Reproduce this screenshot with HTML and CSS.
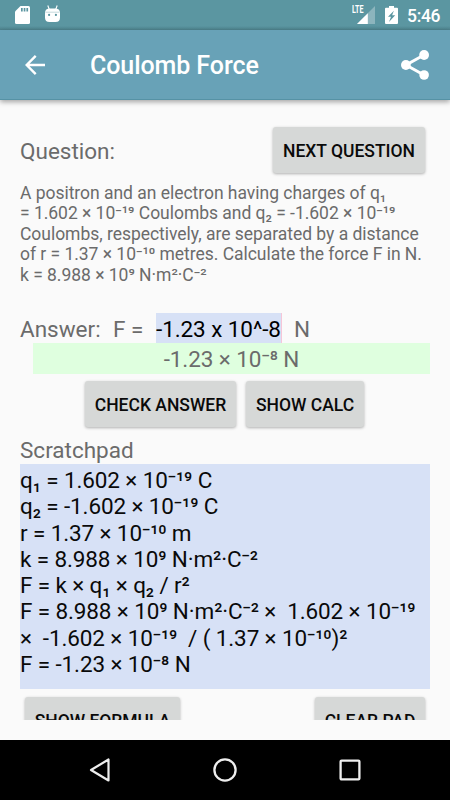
FILE: index.html
```html
<!DOCTYPE html>
<html lang="en">
<head>
  <meta charset="UTF-8" />
  <meta name="viewport" content="width=device-width, initial-scale=1" />
  <title>Coulomb Force</title>
  <link rel="stylesheet" href="styles.css">
</head>
<body>
  <div class="status-bar">
    <div class="status-left">
      <svg width="15" height="18" viewBox="0 0 15 18">
        <path fill="#fff" d="M5.5 0H13.5Q15 0 15 1.5V16.5Q15 18 13.5 18H1.5Q0 18 0 16.5V5.5Z" />
        <path fill="#5b96a1" d="M6 2h1.7v3.6H6zM8.7 2h1.7v3.6H8.7zM11.4 2h1.7v3.6h-1.7z" />
      </svg>
      <svg width="15" height="18" viewBox="0 0 15 18">
        <path stroke="#fff" stroke-width="1.1" fill="none" d="M2.8.5l1.5 4M12.2.5l-1.5 4" />
        <path fill="#fff" d="M0 8.2Q0 4 4 3.6H11Q15 4 15 8.2V12.5Q15 17 10.5 17H4.5Q0 17 0 12.5Z" />
        <path stroke="#c5dadd" stroke-width="1" d="M.7 7.2h13.6" />
        <circle cx="4.1" cy="9.9" r="1.1" fill="#5b96a1" />
        <circle cx="10.9" cy="9.9" r="1.1" fill="#5b96a1" />
      </svg>
    </div>
    <div class="status-right">
      <span class="lte">LTE</span>
      <svg class="signal" width="18" height="18" viewBox="0 0 18 18">
        <path fill="#fff" fill-opacity=".3" d="M18 0v18H0z" />
        <path fill="#fff" d="M10.8 7.2V18H0z" />
      </svg>
      <svg class="battery" width="13" height="18" viewBox="0 0 13 18">
        <path fill="#fff" d="M4 0h5v1.7h3q1 0 1 1V17q0 1-1 1H1q-1 0-1-1V2.7q0-1 1-1h3z" />
        <path fill="#5b96a1" d="M8.9 4.7L3 10.8h3L4 16l6.2-6.7H7.1z" />
      </svg>
      <span class="clock">5:46</span>
    </div>
  </div>

  <div class="app-bar">
    <svg class="back" width="20" height="20" viewBox="0 0 20 20">
      <path fill="none" stroke="#fff" stroke-width="2.4" d="M20 10H2M10.7.9L1.7 10l9 9.1" />
    </svg>
    <h1>Coulomb Force</h1>
    <svg class="share" width="28" height="30" viewBox="0 0 28 30">
      <path fill="none" stroke="#fff" stroke-width="3" d="M23 5L5 15l18 10" />
      <circle cx="23.1" cy="5" r="4.9" fill="#fff" />
      <circle cx="4.9" cy="15" r="4.9" fill="#fff" />
      <circle cx="23.1" cy="25" r="4.8" fill="#fff" />
    </svg>
  </div>

  <div class="content">
    <div class="question-row">
      <h2>Question:</h2>
      <button type="button" class="btn btn-next">Next question</button>
    </div>

    <p class="question">A positron and an electron having charges of q₁
= 1.602 × 10⁻¹⁹ Coulombs and q₂ = -1.602 × 10⁻¹⁹
Coulombs, respectively, are separated by a distance
of r = 1.37 × 10⁻¹⁰ metres. Calculate the force F in N.
k = 8.988 × 10⁹ N·m²·C⁻²</p>

    <div class="answer-row">
      <span class="answer-label">Answer:</span>
      <span class="answer-symbol">F =</span>
      <span class="answer-input">-1.23 x 10^-8</span>
      <span class="answer-unit">N</span>
    </div>
    <div class="answer-result">-1.23 × 10⁻⁸ N</div>

    <div class="check-row">
      <button type="button" class="btn btn-check">Check answer</button>
      <button type="button" class="btn btn-calc">Show calc</button>
    </div>

    <h2 class="pad-label">Scratchpad</h2>
    <div class="pad">q₁ = 1.602 × 10⁻¹⁹ C
q₂ = -1.602 × 10⁻¹⁹ C
r = 1.37 × 10⁻¹⁰ m
k = 8.988 × 10⁹ N·m²·C⁻²
F = k × q₁ × q₂ / r²
F = 8.988 × 10⁹ N·m²·C⁻² ×  1.602 × 10⁻¹⁹
×  -1.602 × 10⁻¹⁹  / ( 1.37 × 10⁻¹⁰)²
F = -1.23 × 10⁻⁸ N</div>

    <div class="pad-row">
      <button type="button" class="btn btn-formula">Show formula</button>
      <button type="button" class="btn btn-clear">Clear pad</button>
    </div>
  </div>

  <div class="nav-bar">
    <svg width="24" height="26" viewBox="0 0 24 26">
      <path fill="none" stroke="#eee" stroke-width="2.2" stroke-linejoin="round" d="M20.5 2.5v21L3 13z" />
    </svg>
    <svg width="24" height="26" viewBox="0 0 24 26">
      <circle cx="12" cy="13" r="10.6" fill="none" stroke="#eee" stroke-width="2.3" />
    </svg>
    <svg width="24" height="26" viewBox="0 0 24 26">
      <rect x="2.6" y="3.6" width="18.8" height="18.8" rx="1" fill="none" stroke="#eee" stroke-width="2.3" />
    </svg>
  </div>
</body>
</html>
```
FILE: styles.css
```css
* {
  margin: 0;
  padding: 0;
  box-sizing: border-box;
}
body {
  width: 450px;
  height: 800px;
  display: flex;
  flex-direction: column;
  overflow: hidden;
  font-family: Roboto, sans-serif;
  font-size: 22.5px;
  background: #fafafa;
  color: #6b6b6b;
}
svg {
  display: block;
  flex: none;
}

/* Status bar */
.status-bar {
  flex: none;
  height: 30px;
  padding: 0 7px 0 15px;
  display: flex;
  justify-content: space-between;
  background: linear-gradient(#5b96a1 26px, #4d828d);
  color: #fff;
}
.status-left {
  display: flex;
  gap: 15px;
  padding-top: 6px;
}
.status-left svg + svg {
  margin-top: -1px;
}
.status-right {
  display: flex;
  align-items: flex-start;
}
.lte {
  width: 12px;
  margin-top: 5px;
  font-size: 10.5px;
  line-height: 10px;
  font-weight: 700;
  transform: scaleX(.68);
  transform-origin: left;
}
.signal {
  margin: 6px 10px 0 -7px;
}
.battery {
  margin: 6px 9px 0 0;
}
.clock {
  width: 36px;
  font-size: 17.5px;
  font-weight: 500;
  line-height: 32px;
  letter-spacing: -0.3px;
  white-space: nowrap;
}

/* App bar */
.app-bar {
  flex: none;
  height: 70px;
  display: flex;
  align-items: center;
  padding: 0 21px 0 25px;
  background: #68a2b7;
  border-bottom: 1px solid #5692a5;
  box-shadow: 0 2px 5px rgba(0, 0, 0, .35);
  color: #fff;
}
.app-bar h1 {
  flex: 1;
  margin-left: 45px;
  padding-top: 3px;
  font-size: 25px;
  line-height: 30px;
  font-weight: 500;
  letter-spacing: -0.08px;
}

/* Scrolling content */
.content {
  height: 600px;
  flex: none;
  margin: 20px 0;
  padding: 0 20px;
  overflow: hidden;
}
h2 {
  font-size: 22.5px;
  font-weight: 400;
}
.question-row {
  height: 63px;
  padding: 7px 5px 0 0;
  display: flex;
  justify-content: space-between;
}
.question-row h2 {
  line-height: 48px;
}
.btn {
  height: 46px;
  padding-top: 2px;
  border: none;
  border-radius: 3px;
  background: #d6d8d7;
  box-shadow: 0 1px 3px rgba(0, 0, 0, .3);
  color: #0a0a0a;
  font-family: inherit;
  font-size: 17.5px;
  font-weight: 500;
  text-transform: uppercase;
  white-space: nowrap;
}
.btn-next {
  width: 152px;
}
.question {
  height: 130px;
  font-size: 17.5px;
  line-height: 20.4px;
  letter-spacing: -0.03px;
  white-space: pre;
}
.answer-row {
  height: 30px;
  display: flex;
  line-height: 32px;
  white-space: pre;
}
.answer-label {
  width: 93px;
}
.answer-symbol {
  width: 43px;
}
.answer-input {
  width: 126px;
  background: #d7e1f6;
  border-right: 1px solid #f6c6d8;
  color: #000;
  letter-spacing: -0.08px;
}
.answer-unit {
  margin-left: 12px;
}
.answer-result {
  height: 31px;
  margin-left: 13px;
  background: #dfffdf;
  line-height: 32px;
  letter-spacing: -0.08px;
  text-align: center;
  white-space: pre;
}
.check-row {
  display: flex;
  gap: 10px;
  padding: 7px 0 0 65px;
}
.btn-check {
  width: 151px;
}
.btn-calc {
  width: 118px;
}
.pad-label {
  margin-top: 10px;
  height: 27px;
  line-height: 27px;
}
.pad {
  height: 225px;
  padding-top: 3px;
  background: #d7e1f6;
  color: #0a0a0a;
  line-height: 26.25px;
  letter-spacing: -0.12px;
  white-space: pre;
}
.pad-row {
  display: flex;
  justify-content: space-between;
  padding: 8px 5px 0;
}
.btn-formula {
  width: 155px;
}
.btn-clear {
  width: 110px;
}

/* Navigation bar */
.nav-bar {
  flex: none;
  height: 60px;
  display: flex;
  align-items: center;
  justify-content: center;
  gap: 101px;
  background: #000;
}
```
